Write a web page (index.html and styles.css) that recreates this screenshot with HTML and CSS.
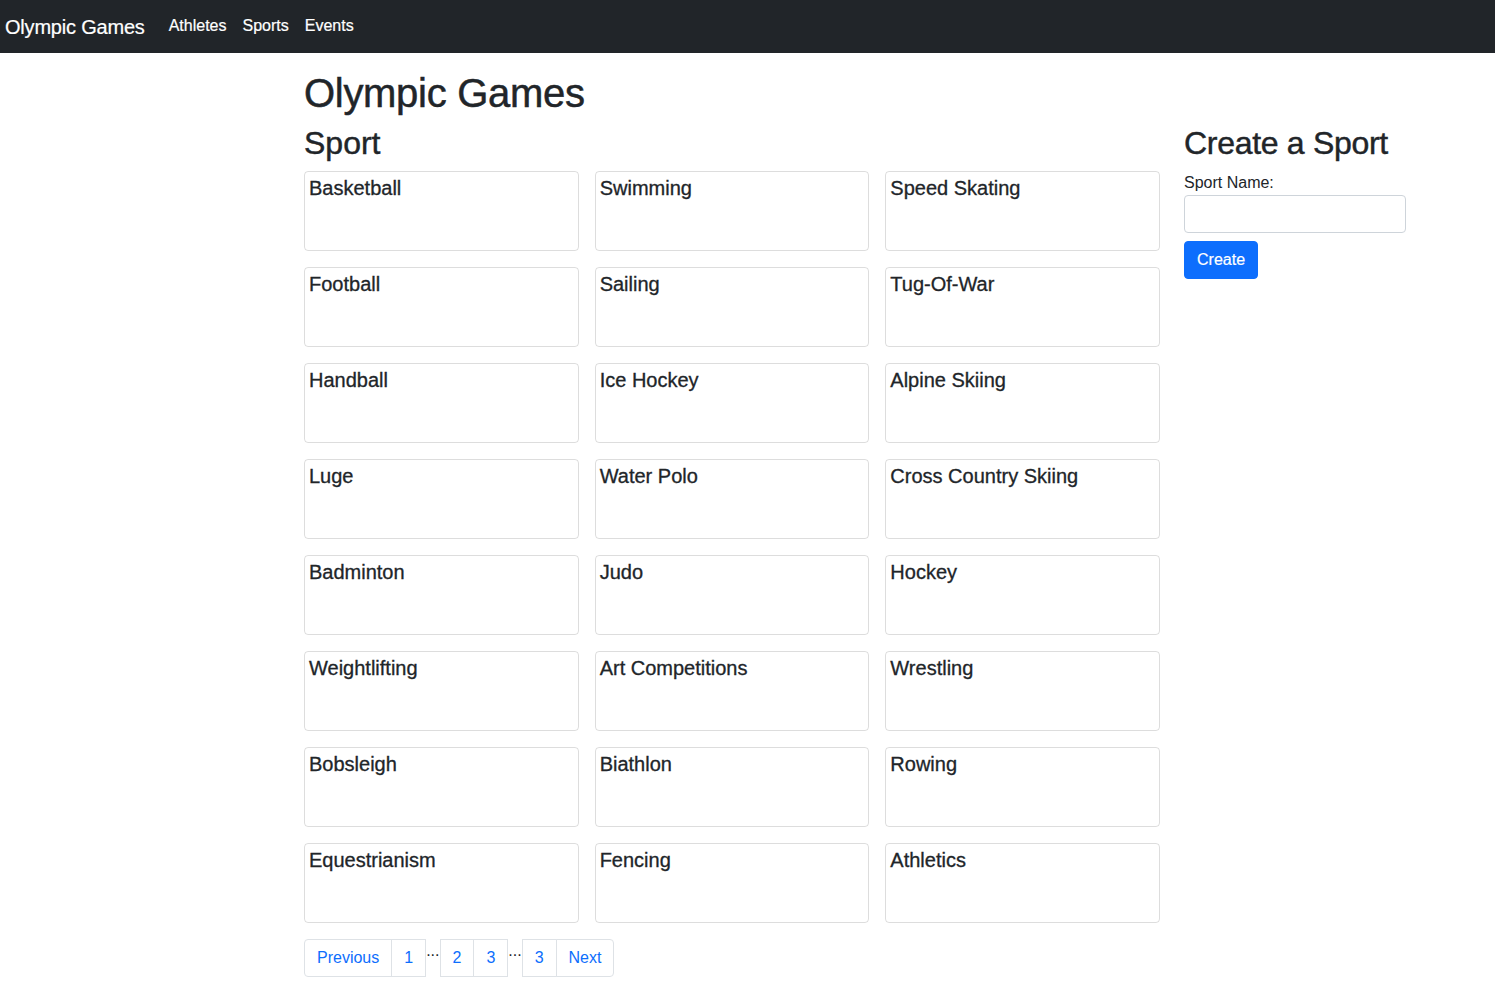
FILE: index.html
```html
<!DOCTYPE html>
<html lang="en">
<head>
<meta charset="utf-8">
<title>Olympic Games</title>
<link rel="stylesheet" href="styles.css">
</head>
<body>
<nav class="navbar">
  <a class="brand" href="#">Olympic Games</a>
  <ul class="nav-links">
    <li><a href="#">Athletes</a></li>
    <li><a href="#">Sports</a></li>
    <li><a href="#">Events</a></li>
  </ul>
</nav>
<div class="page">
  <h1 class="title">Olympic Games</h1>
  <div class="row">
    <main class="main-col">
      <h2 class="section-title">Sport</h2>
      <div class="sport-grid">
        <div class="card"><h5 class="card-title">Basketball</h5></div>
        <div class="card"><h5 class="card-title">Swimming</h5></div>
        <div class="card"><h5 class="card-title">Speed Skating</h5></div>
        <div class="card"><h5 class="card-title">Football</h5></div>
        <div class="card"><h5 class="card-title">Sailing</h5></div>
        <div class="card"><h5 class="card-title">Tug-Of-War</h5></div>
        <div class="card"><h5 class="card-title">Handball</h5></div>
        <div class="card"><h5 class="card-title">Ice Hockey</h5></div>
        <div class="card"><h5 class="card-title">Alpine Skiing</h5></div>
        <div class="card"><h5 class="card-title">Luge</h5></div>
        <div class="card"><h5 class="card-title">Water Polo</h5></div>
        <div class="card"><h5 class="card-title">Cross Country Skiing</h5></div>
        <div class="card"><h5 class="card-title">Badminton</h5></div>
        <div class="card"><h5 class="card-title">Judo</h5></div>
        <div class="card"><h5 class="card-title">Hockey</h5></div>
        <div class="card"><h5 class="card-title">Weightlifting</h5></div>
        <div class="card"><h5 class="card-title">Art Competitions</h5></div>
        <div class="card"><h5 class="card-title">Wrestling</h5></div>
        <div class="card"><h5 class="card-title">Bobsleigh</h5></div>
        <div class="card"><h5 class="card-title">Biathlon</h5></div>
        <div class="card"><h5 class="card-title">Rowing</h5></div>
        <div class="card"><h5 class="card-title">Equestrianism</h5></div>
        <div class="card"><h5 class="card-title">Fencing</h5></div>
        <div class="card"><h5 class="card-title">Athletics</h5></div>
      </div>
      <ul class="pagination">
        <li class="page-item first"><a class="page-link" href="#">Previous</a></li>
        <li class="page-item"><a class="page-link" href="#">1</a></li>
        <li class="ellipsis">...</li>
        <li class="page-item"><a class="page-link" href="#">2</a></li>
        <li class="page-item"><a class="page-link" href="#">3</a></li>
        <li class="ellipsis">...</li>
        <li class="page-item"><a class="page-link" href="#">3</a></li>
        <li class="page-item last"><a class="page-link" href="#">Next</a></li>
      </ul>
    </main>
    <aside class="side-col">
      <h2 class="section-title">Create a Sport</h2>
      <form class="create-form">
        <label class="form-label" for="sportName">Sport Name:</label>
        <input class="form-input" id="sportName" type="text">
        <button class="btn-primary" type="button">Create</button>
      </form>
    </aside>
  </div>
</div>
</body>
</html>
```
FILE: styles.css
```css
* { box-sizing: border-box; }

body {
  margin: 0;
  font-family: "Liberation Sans", Arial, Helvetica, sans-serif;
  font-size: 16px;
  line-height: 1.5;
  color: #212529;
  background: #fff;
}

.navbar {
  display: flex;
  align-items: center;
  height: 53px;
  background: #212529;
  padding: 0 5px;
}

.brand {
  color: #fff;
  text-decoration: none;
  font-size: 20px;
  line-height: 30px;
  margin-right: 16px;
  letter-spacing: -0.2px;
  -webkit-text-stroke: 0.2px #fff;
}

.nav-links {
  display: flex;
  list-style: none;
  margin: 0;
  padding: 0;
}

.nav-links a {
  display: block;
  color: #fff;
  text-decoration: none;
  padding: 7px 8px 9px;
  font-size: 16px;
  line-height: 24px;
  -webkit-text-stroke: 0.2px #fff;
}

.page {
  padding: 16px 89px 0 304px;
}

.title {
  margin: 0 0 7px;
  font-size: 40px;
  font-weight: 500;
  line-height: 1.2;
  letter-spacing: -0.3px;
  -webkit-text-stroke: 0.5px #212529;
}

.row {
  display: flex;
  gap: 24px;
  align-items: flex-start;
}

.main-col {
  width: 856px;
  flex: none;
}

.side-col {
  width: 222px;
  flex: none;
}

.section-title {
  margin: 0 0 8px;
  font-size: 32px;
  font-weight: 500;
  line-height: 1.2;
  -webkit-text-stroke: 0.45px #212529;
}

.side-col .section-title {
  letter-spacing: -0.3px;
}

.sport-grid {
  display: grid;
  grid-template-columns: repeat(3, 1fr);
  gap: 16px;
  margin-top: 9px;
}

.card {
  height: 80px;
  border: 1px solid rgba(0, 0, 0, 0.135);
  border-radius: 4px;
  padding: 4px;
}

.card-title {
  margin: 0;
  font-size: 20px;
  font-weight: 500;
  line-height: 1.2;
  -webkit-text-stroke: 0.3px #212529;
}

.pagination {
  display: flex;
  align-items: flex-start;
  list-style: none;
  margin: 16px 0 0;
  padding: 0;
}

.page-link {
  display: block;
  padding: 6px 12px;
  line-height: 24px;
  font-size: 16px;
  color: #0d6efd;
  text-decoration: none;
  border: 1px solid #dee2e6;
  background: #fff;
}

.page-item + .page-item .page-link {
  margin-left: -1px;
}

.page-item.first .page-link {
  border-radius: 4px 0 0 4px;
}

.page-item.last .page-link {
  border-radius: 0 4px 4px 0;
}

.ellipsis {
  font-size: 16px;
  line-height: 24px;
  padding: 0;
  color: #212529;
}

.create-form {
  display: flex;
  flex-direction: column;
  align-items: flex-start;
}

.form-label {
  font-size: 16px;
  line-height: 24px;
  margin-top: 1px;
}

.form-input {
  width: 222px;
  height: 38px;
  border: 1px solid #ced4da;
  border-radius: 4px;
  padding: 6px 12px;
  font: inherit;
  margin: 0;
}

.btn-primary {
  margin-top: 8px;
  height: 38px;
  padding: 6px 12px;
  background: #0d6efd;
  color: #fff;
  border: 1px solid #0d6efd;
  border-radius: 4px;
  font-family: inherit;
  font-size: 16px;
  line-height: 24px;
  -webkit-text-stroke: 0.2px #fff;
}
```
